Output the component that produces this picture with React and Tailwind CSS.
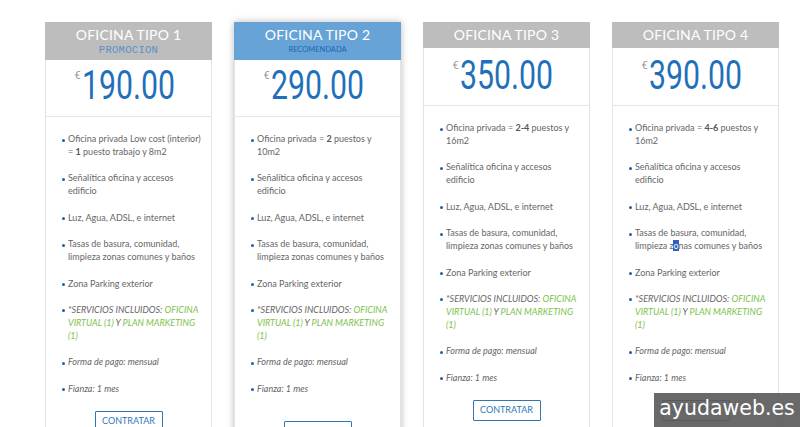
import React from "react";

const G = ({ children }) => <span className="text-[#7dc24b]">{children}</span>;

const commonItems = (first, highlight) => [
  { lines: first },
  { lines: ["Señalítica oficina y accesos", "edificio"] },
  { lines: ["Luz, Agua, ADSL, e internet"] },
  {
    lines: [
      "Tasas de basura, comunidad,",
      highlight ? (
        <>
          limpieza z<span className="bg-[#2d5fc4] text-white">o</span>nas comunes y baños
        </>
      ) : (
        "limpieza zonas comunes y baños"
      ),
    ],
  },
  { lines: ["Zona Parking exterior"] },
  {
    italic: true,
    lines: [
      <>
        *SERVICIOS INCLUIDOS: <G>OFICINA</G>
      </>,
      <>
        <G>VIRTUAL (1)</G> Y <G>PLAN MARKETING</G>
      </>,
      <G>(1)</G>,
    ],
  },
  { italic: true, lines: ["Forma de pago: mensual"] },
  { italic: true, lines: ["Fianza: 1 mes"] },
];

const plans = [
  {
    title: "OFICINA TIPO 1",
    sub: "PROMOCION",
    kind: "promo",
    price: "190.00",
    first: [
      "Oficina privada Low cost (interior)",
      <>
        = <b className="font-bold text-[#555]">1</b> puesto trabajo y 8m2
      </>,
    ],
  },
  {
    title: "OFICINA TIPO 2",
    sub: "RECOMENDADA",
    kind: "featured",
    price: "290.00",
    first: [
      <>
        Oficina privada = <b className="font-bold text-[#555]">2</b> puestos y
      </>,
      "10m2",
    ],
  },
  {
    title: "OFICINA TIPO 3",
    kind: "plain",
    price: "350.00",
    first: [
      <>
        Oficina privada = <b className="font-bold text-[#555]">2-4</b> puestos y
      </>,
      "16m2",
    ],
  },
  {
    title: "OFICINA TIPO 4",
    kind: "plain",
    price: "390.00",
    highlight: true,
    first: [
      <>
        Oficina privada = <b className="font-bold text-[#555]">4-6</b> puestos y
      </>,
      "16m2",
    ],
  },
];

function Card({ plan }) {
  const featured = plan.kind === "featured";
  const plain = plan.kind === "plain";
  const items = commonItems(plan.first, plan.highlight);
  return (
    <div
      className={
        "w-[167px] shrink-0 flex flex-col bg-white " +
        (featured ? "shadow-[0_0_7px_rgba(0,0,0,0.28)]" : "")
      }
    >
      <div
        className={
          "flex flex-col items-center " +
          (plain ? "h-[26px] justify-center " : "h-[38px] pt-[4px] ") +
          (featured ? "bg-[#67a3d6]" : "bg-[#bdbdbd]")
        }
      >
        <div className="text-white text-[14px] leading-[18px] tracking-[0.2px] font-['Lato',sans-serif]">
          {plan.title}
        </div>
        {plan.kind === "promo" && (
          <div className="text-[#5b90c8] text-[10.5px] leading-[12px] font-['Liberation_Mono',monospace] tracking-[0.3px]">
            {plan.sub}
          </div>
        )}
        {featured && (
          <div className="text-[#2066b3] text-[7.5px] leading-[12px] font-['Lato',sans-serif]">
            {plan.sub}
          </div>
        )}
      </div>
      <div className="flex-1 flex flex-col border-x border-[#e3e3e3]">
        <div
          className={
            "border-b border-[#e6e6e6] flex justify-center items-start pr-[8px] " +
            (plain ? "h-[58px] pt-[8px]" : "h-[57px] pt-[6px]")
          }
        >
          <span className="text-[#9a9a9a] text-[11px] leading-none mt-[4px] mr-[1px] font-['Roboto',sans-serif]">
            €
          </span>
          <span className="inline-block text-[40px] leading-none text-[#1f70bb] font-['Roboto',sans-serif] scale-x-[0.755] -mx-[15px]">
            {plan.price}
          </span>
        </div>
        <ul className="flex flex-col gap-[13.4px] pl-[16px] pr-[6px] pt-[15px] font-['Lato',sans-serif] text-[9px] text-[#666]">
          {items.map((it, i) => (
            <li key={i} className="flex">
              <span className="w-[3px] h-[3px] rounded-full bg-[#1f5fa8] mt-[6.5px] mr-[3px] shrink-0" />
              <div className={"leading-[13px] " + (it.italic ? "italic" : "")}>
                {it.lines.map((l, j) => (
                  <div key={j} className="whitespace-nowrap">
                    {l}
                  </div>
                ))}
              </div>
            </li>
          ))}
        </ul>
        <div className={"flex justify-center " + (featured ? "pt-[26px]" : "pt-[16px]")}>
          <div className="w-[68px] h-[21px] border border-[#3177b8] flex items-center justify-center text-[#3177b8] text-[9px] font-['Lato',sans-serif] rounded-[1px]">
            CONTRATAR
          </div>
        </div>
        <div className="h-[40px]" />
      </div>
    </div>
  );
}

export default function App() {
  return (
    <div className="relative w-[800px] h-[427px] overflow-hidden bg-white">
      <div className="flex gap-[22px] pl-[45px] pt-[22px]">
        {plans.map((p) => (
          <Card key={p.title} plan={p} />
        ))}
      </div>
      <div className="absolute right-0 bottom-0 w-[146px] h-[34px] bg-[#595959]/90 flex items-center justify-center text-white text-[20.5px] font-['DejaVu_Sans',sans-serif] leading-none pb-[3px]">
        ayudaweb.es
      </div>
    </div>
  );
}
